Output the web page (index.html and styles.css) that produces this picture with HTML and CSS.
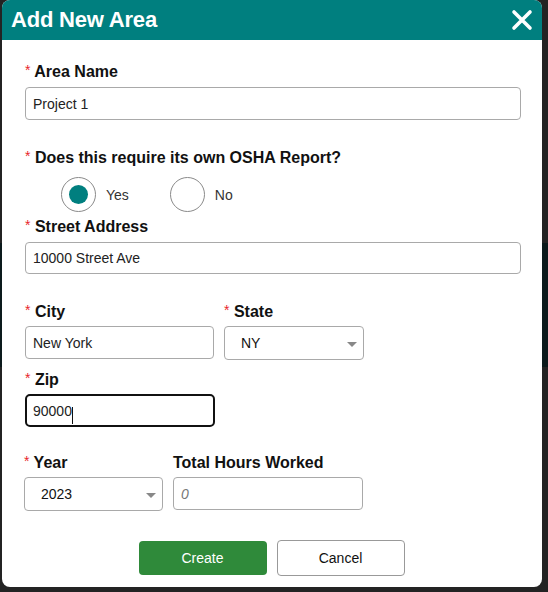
FILE: index.html
```html
<!DOCTYPE html>
<html lang="en">
<head>
    <meta charset="UTF-8">
    <meta name="viewport" content="width=device-width, initial-scale=1.0">
    <title>Add New Area</title>
    <link rel="stylesheet" href="styles.css">
</head>
<body>
    <div class="backdrop">
        <div class="modal">
            <div class="modal-header">
                <h2>Add New Area</h2>
                <button class="close" type="button" aria-label="Close">
                    <svg width="22" height="22" viewBox="0 0 22 22">
                        <path d="M3 3 L19 19 M19 3 L3 19" stroke="#fff" stroke-width="3.6" stroke-linecap="round"/>
                    </svg>
                </button>
            </div>
            <form class="modal-body" id="area-form">
                <div class="field">
                    <label for="area_name"><span class="req">*</span> Area Name</label>
                    <input type="text" id="area_name" value="Project 1">
                </div>

                <div class="field field-osha">
                    <label><span class="req">*</span> Does this require its own OSHA Report?</label>
                    <div class="radio-row">
                        <label class="radio"><input type="radio" name="osha" checked><span class="dot"></span>Yes</label>
                        <label class="radio"><input type="radio" name="osha"><span class="dot"></span>No</label>
                    </div>
                </div>

                <div class="field field-street">
                    <label for="street"><span class="req">*</span> Street Address</label>
                    <input type="text" id="street" value="10000 Street Ave">
                </div>

                <div class="row row-city">
                    <div class="field">
                        <label for="city"><span class="req">*</span> City</label>
                        <input type="text" id="city" value="New York">
                    </div>
                    <div class="field">
                        <label for="state"><span class="req">*</span> State</label>
                        <div class="select-wrap">
                            <select id="state">
                                <option>NY</option>
                                <option>NJ</option>
                                <option>CA</option>
                            </select>
                        </div>
                    </div>
                </div>

                <div class="row row-zip">
                    <div class="field">
                        <label for="zip"><span class="req">*</span> Zip</label>
                        <div class="focus-wrap">
                            <input type="text" id="zip" class="focused" value="90000">
                            <span class="caret"></span>
                        </div>
                    </div>
                </div>

                <div class="row row-year">
                    <div class="field">
                        <label for="year"><span class="req">*</span> Year</label>
                        <div class="select-wrap">
                            <select id="year">
                                <option>2023</option>
                                <option>2022</option>
                            </select>
                        </div>
                    </div>
                    <div class="field">
                        <label for="hours">Total Hours Worked</label>
                        <input type="text" id="hours" placeholder="0">
                    </div>
                </div>

                <div class="actions">
                    <button type="submit" class="btn btn-create">Create</button>
                    <button type="button" class="btn btn-cancel">Cancel</button>
                </div>
            </form>
        </div>
    </div>
</body>
</html>
```

FILE: styles.css
```css
html {
    background-color: #232323;
}
body {
    font-family: "Liberation Sans", Arial, sans-serif;
    margin: 0;
    padding: 0;
    color: #111;
}
.backdrop {
    padding: 0 6px 6px 2px;
    background:
        linear-gradient(#0c1a1c, #0c1a1c) 0 243px / 100% 124px no-repeat,
        #232323;
}
.modal {
    background-color: #fff;
    border-radius: 8px;
    overflow: hidden;
}
.modal-header {
    height: 40px;
    background-color: #007f7f;
    display: flex;
    align-items: center;
    justify-content: space-between;
    padding: 0 8px 0 9px;
}
.modal-header h2 {
    margin: 0;
    color: #fff;
    font-size: 22px;
    line-height: 26px;
    font-weight: bold;
    letter-spacing: -0.2px;
}
.close {
    background: none;
    border: none;
    padding: 0;
    width: 24px;
    height: 24px;
    display: flex;
    align-items: center;
    justify-content: center;
    cursor: pointer;
}
.modal-body {
    padding: 23px 21px 11px 23px;
}
.field label {
    display: block;
    height: 18px;
    font-size: 16px;
    line-height: 18px;
    font-weight: bold;
    color: #111;
}
.req {
    color: #e8262b;
    font-weight: normal;
    font-size: 14px;
    line-height: 0;
    vertical-align: 2px;
}
.field input[type="text"],
.field select {
    display: block;
    box-sizing: border-box;
    width: 100%;
    height: 33px;
    margin-top: 6px;
    padding: 0 7px;
    font-family: "Liberation Sans", Arial, sans-serif;
    font-size: 14px;
    color: #222;
    background-color: #fff;
    border: 1px solid #a9a9a9;
    border-radius: 4px;
    outline: none;
}
.field input::placeholder {
    color: #777;
    font-style: italic;
}
.field-osha {
    margin-top: 29px;
}
.radio-row {
    display: flex;
    align-items: center;
    margin-top: 10px;
    padding-left: 36px;
    gap: 41px;
}
.radio-row .radio {
    display: flex;
    align-items: center;
    height: 35px;
    gap: 10px;
    font-size: 14px;
    font-weight: normal;
    color: #333;
    cursor: pointer;
}
.radio input {
    display: none;
}
.radio .dot {
    box-sizing: border-box;
    width: 35px;
    height: 35px;
    border: 1px solid #8a8a8a;
    border-radius: 50%;
    display: flex;
    align-items: center;
    justify-content: center;
}
.radio input:checked + .dot::after {
    content: "";
    width: 19px;
    height: 19px;
    border-radius: 50%;
    background-color: #007f7f;
}
.field-street {
    margin-top: 6px;
}
.field-street input[type="text"] {
    height: 32px;
}
.row {
    display: grid;
    column-gap: 10px;
}
.row .field input[type="text"],
.row .field select {
    margin-top: 5px;
}
.row-city {
    margin-top: 29px;
    grid-template-columns: 189px 140px;
}
.row-zip {
    margin-top: 11px;
    grid-template-columns: 190px;
}
.row-year {
    margin-top: 27px;
    margin-left: -1px;
    grid-template-columns: 139px 190px;
}
.select-wrap {
    position: relative;
}
.select-wrap::after {
    content: "";
    position: absolute;
    right: 7px;
    top: 16px;
    border-left: 5px solid transparent;
    border-right: 5px solid transparent;
    border-top: 5px solid #888;
}
.field select {
    appearance: none;
    -webkit-appearance: none;
    padding-left: 16px;
    height: 34px;
    color: #111;
}
.focus-wrap {
    position: relative;
}
.row .field input.focused {
    margin-top: 5px;
    border: 2px solid #111;
    border-radius: 5px;
    padding-left: 6px;
}
.caret {
    position: absolute;
    left: 47px;
    top: 13px;
    width: 1px;
    height: 17px;
    background-color: #111;
}
.actions {
    display: flex;
    justify-content: center;
    gap: 10px;
    margin-top: 29px;
    padding-right: 3px;
}
.btn {
    box-sizing: border-box;
    width: 128px;
    height: 36px;
    font-family: "Liberation Sans", Arial, sans-serif;
    font-size: 14px;
    border-radius: 4px;
    cursor: pointer;
}
.btn-create {
    background-color: #2f8a3a;
    color: #fff;
    border: none;
    height: 34px;
    margin-top: 1px;
}
.btn-cancel {
    background-color: #fff;
    color: #111;
    border: 1px solid #999;
}
```
